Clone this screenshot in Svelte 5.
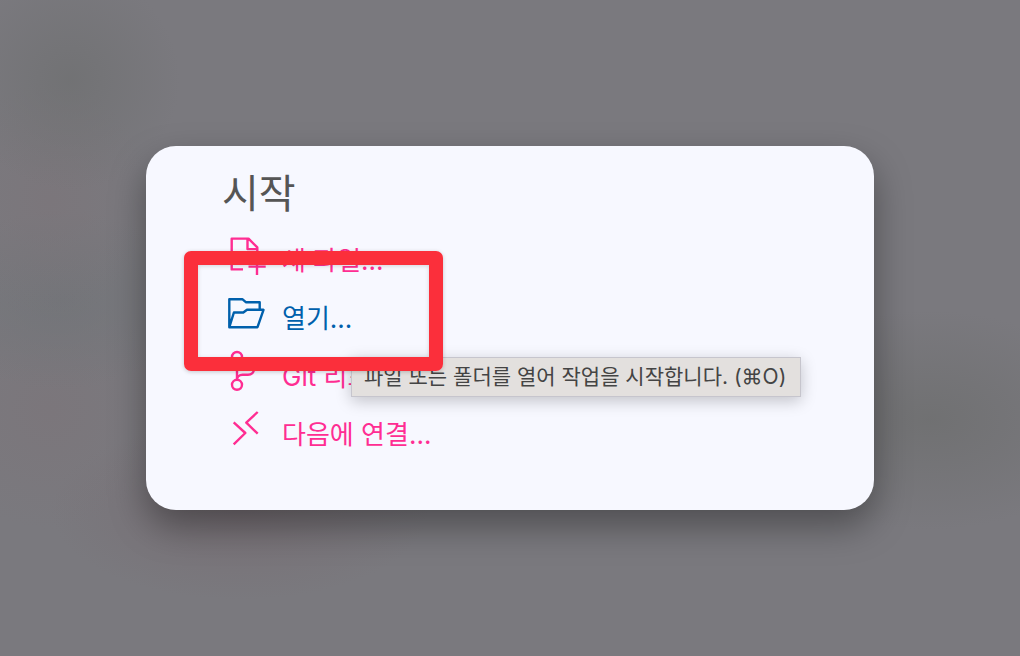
<!--
  Start panel with a list of actions.
  The highlighted action carries a marker frame and its tooltip.
-->
<script lang="ts">
  interface StartAction {
    id: string;
    label: string;
    hint?: string;
  }

  const actions: StartAction[] = [
    { id: 'new-file', label: '새 파일...' },
    { id: 'open', label: '열기...', hint: '파일 또는 폴더를 열어 작업을 시작합니다. (⌘O)' },
    { id: 'clone', label: 'Git 리포지토리 복제...' },
    { id: 'connect', label: '다음에 연결...' }
  ];
</script>

<main class="backdrop">
  <section class="panel" aria-labelledby="start-title">
    <h1 id="start-title">시작</h1>

    <ul class="actions">
      {#each actions as action (action.id)}
        <li class="action">
          <button
            type="button"
            class:active={action.hint}
            aria-describedby={action.hint ? `${action.id}-hint` : undefined}
          >
            <svg class="icon" viewBox="0 0 40 40" aria-hidden="true">
              {#if action.id === 'new-file'}
                <path d="M17 34.4H5.7V3.6H22.5L31.3 12.4V24M21.5 3.6V14.1H31.3M31 23V39.9M22.5 31.6H39.7" />
              {:else if action.id === 'open'}
                <path d="M33.7 16.8V9.2H19.8L16.3 6.2H3.3V34.2H31.5L37.5 16.8H21L17.3 19.5H7.9L3.5 33.7" />
              {:else if action.id === 'clone'}
                <circle cx="11" cy="6" r="5" />
                <circle cx="11" cy="33.8" r="5" />
                <circle cx="28" cy="13.4" r="5" />
                <path d="M11 11V28.8C11 25.5 13.5 23.8 16.5 23.8H22C26 23.8 27.6 22 28 18.4" />
              {:else}
                <path d="M7.7 13.3L19.3 24L7.7 35.3M31.7 3L20.3 13.7L31.7 24.7" />
              {/if}
            </svg>
            <span class="label">{action.label}</span>
          </button>

          {#if action.hint}
            <div class="tooltip" role="tooltip" id="{action.id}-hint">{action.hint}</div>
            <div class="marker" aria-hidden="true"></div>
          {/if}
        </li>
      {/each}
    </ul>
  </section>
</main>

<style>
  :global(body) {
    margin: 0;
  }

  .backdrop {
    box-sizing: border-box;
    min-height: 100vh;
    padding: 146px;
    font-family: Inter, 'Noto Sans CJK KR', sans-serif;
    background:
      radial-gradient(circle at 70px 80px, rgba(110, 111, 112, 0.7), transparent 110px),
      radial-gradient(ellipse 100px 120px at 50px 200px, rgba(124, 115, 120, 0.5), transparent),
      radial-gradient(ellipse 130px 90px at 60px 300px, rgba(112, 115, 119, 0.7), transparent),
      radial-gradient(ellipse 120px 120px at 50px 410px, rgba(124, 115, 120, 0.5), transparent),
      radial-gradient(ellipse 190px 90px at 240px 510px, rgba(116, 102, 108, 0.5), transparent),
      radial-gradient(ellipse 180px 110px at 930px 420px, rgba(108, 109, 109, 0.7), transparent),
      #7a797e;
  }

  .panel {
    box-sizing: border-box;
    padding: 16px 76px 52px;
    border-radius: 30px;
    background: #f7f8ff;
    box-shadow: 0 16px 36px rgba(0, 0, 0, 0.36);
  }

  h1 {
    margin: 0;
    font-size: 40px;
    font-weight: 400;
    line-height: 64px;
    color: #555;
  }

  .actions {
    margin: 0;
    padding: 0;
    list-style: none;
  }

  .action {
    position: relative;
  }

  button {
    display: flex;
    align-items: center;
    gap: 16px;
    height: 58px;
    padding: 0 4px;
    border: 0;
    background: none;
    color: #ff2d92;
    font: inherit;
    font-size: 26px;
    white-space: nowrap;
    cursor: pointer;
  }

  button.active {
    color: #0060ac;
  }

  .label {
    padding-top: 6px;
  }

  .icon {
    flex: none;
    width: 40px;
    height: 40px;
    fill: none;
    stroke: currentColor;
    stroke-width: 2.4;
    stroke-linejoin: round;
    overflow: visible;
  }

  .tooltip {
    position: absolute;
    z-index: 1;
    top: 73px;
    left: 129px;
    box-sizing: border-box;
    width: 450px;
    padding: 0 12px;
    border: 1px solid #c6c5cd;
    background: #e3e0de;
    box-shadow: 0 4px 16px rgba(0, 0, 0, 0.22);
    color: #444;
    font-size: 21px;
    line-height: 38px;
    white-space: nowrap;
  }

  .marker {
    position: absolute;
    z-index: 2;
    top: -33px;
    left: -38px;
    box-sizing: border-box;
    width: 259px;
    height: 120px;
    border: 14px solid #fb2f3b;
    border-radius: 7px;
    box-shadow: 0 1px 4px rgba(0, 0, 0, 0.2), inset 0 1px 4px rgba(0, 0, 0, 0.15);
    pointer-events: none;
  }
</style>
